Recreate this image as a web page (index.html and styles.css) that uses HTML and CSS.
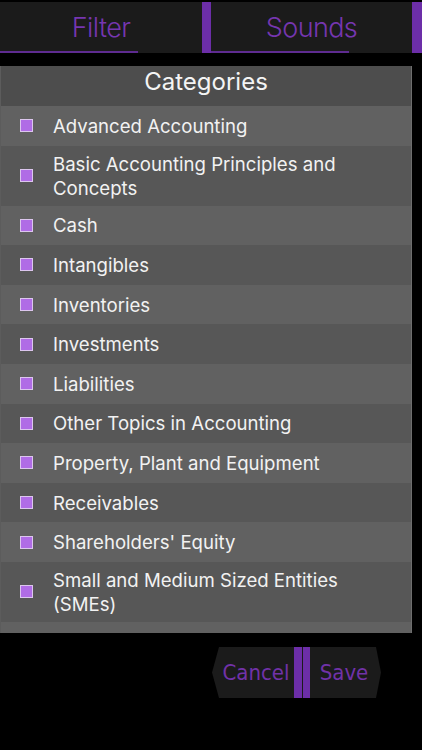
FILE: index.html
```html
<!DOCTYPE html>
<html>
<head>
<meta charset="utf-8">
<link rel="stylesheet" href="styles.css">
</head>
<body>
<div class="tabs">
  <div class="tab"><span class="tab-label">Filter</span><div class="tab-line"></div></div>
  <div class="divider"></div>
  <div class="tab"><span class="tab-label">Sounds</span><div class="tab-line"></div></div>
  <div class="divider end"></div>
</div>
<div class="panel">
  <div class="panel-head">Categories</div>
  <ul class="list">
    <li class="row"><span class="box"></span><span class="label">Advanced Accounting</span></li>
    <li class="row"><span class="box"></span><span class="label">Basic Accounting Principles and Concepts</span></li>
    <li class="row"><span class="box"></span><span class="label">Cash</span></li>
    <li class="row"><span class="box"></span><span class="label">Intangibles</span></li>
    <li class="row"><span class="box"></span><span class="label">Inventories</span></li>
    <li class="row"><span class="box"></span><span class="label">Investments</span></li>
    <li class="row"><span class="box"></span><span class="label">Liabilities</span></li>
    <li class="row"><span class="box"></span><span class="label">Other Topics in Accounting</span></li>
    <li class="row"><span class="box"></span><span class="label">Property, Plant and Equipment</span></li>
    <li class="row"><span class="box"></span><span class="label">Receivables</span></li>
    <li class="row"><span class="box"></span><span class="label">Shareholders' Equity</span></li>
    <li class="row"><span class="box"></span><span class="label">Small and Medium Sized Entities (SMEs)</span></li>
    <li class="row partial"></li>
  </ul>
</div>
<div class="actions">
  <div class="btn cancel">Cancel</div>
  <div class="sep"><span></span><span></span></div>
  <div class="btn save">Save</div>
</div>
</body>
</html>
```
FILE: styles.css
```css
html, body {
  margin: 0;
  padding: 0;
  background: #000;
  width: 422px;
  height: 750px;
  overflow: hidden;
}
body {
  font-family: Inter, "Liberation Sans", sans-serif;
}
.tabs {
  display: flex;
  height: 51px;
  margin-top: 2px;
}
.tab {
  background: #1b1b1b;
  width: 202px;
  display: flex;
  flex-direction: column;
  justify-content: space-between;
  align-items: center;
}
.tab + .divider + .tab {
  width: 201px;
}
.tab-label {
  font-family: Inter, sans-serif;
  font-weight: 300;
  font-size: 27px;
  line-height: 32px;
  color: #7636b0;
  margin-top: 10px;
  letter-spacing: -0.6px;
}
.tab-line {
  align-self: flex-start;
  width: 138px;
  height: 2px;
  background: #5e2b90;
}
.divider {
  width: 9px;
  background: #6c2ea8;
}
.divider.end {
  width: 10px;
}
.panel {
  margin-top: 13px;
  border-right: 1px solid #6e6e6e;
  border-left: 1px solid #5c5c5c;
  box-sizing: border-box;
  width: 412px;
}
.panel-head {
  background: #4d4d4d;
  height: 40px;
  line-height: 32px;
  text-align: center;
  color: #f4f4f4;
  font-size: 24px;
}
.list {
  list-style: none;
  margin: 0;
  padding: 0;
}
.row {
  display: flex;
  align-items: center;
  min-height: 39.6px;
  padding: 6px 0;
  box-sizing: border-box;
  background: #616161;
}
.row:nth-child(even) {
  background: #575757;
}
.row.partial {
  min-height: 11px;
  padding: 0;
}
.box {
  flex: none;
  width: 11px;
  height: 11px;
  margin-left: 19px;
  margin-right: 20px;
  background: #b06ce6;
  border: 1px solid #dcc6ee;
}
.label {
  color: #f2f2f2;
  font-size: 18.6px;
  line-height: 24px;
  padding-right: 20px;
}
.actions {
  display: flex;
  margin-top: 14px;
  padding-left: 212px;
  height: 51px;
}
.btn {
  background: #1b1b1b;
  color: #7132a8;
  font-family: "DejaVu Sans Condensed", "DejaVu Sans", sans-serif;
  font-stretch: condensed;
  font-size: 22px;
  display: flex;
  align-items: center;
  justify-content: center;
}
.cancel {
  width: 82px;
  padding-left: 6px;
  box-sizing: border-box;
  clip-path: polygon(7px 0, 100% 0, 100% 100%, 7px 100%, 0 50%);
}
.save {
  width: 71px;
  padding-right: 3px;
  box-sizing: border-box;
  clip-path: polygon(0 0, calc(100% - 5px) 0, 100% 50%, calc(100% - 5px) 100%, 0 100%);
}
.sep {
  display: flex;
  gap: 1px;
  background: #1b1b1b;
}
.sep span {
  width: 8px;
  background: #6c2ea8;
}
.sep span + span {
  width: 7px;
}
```
